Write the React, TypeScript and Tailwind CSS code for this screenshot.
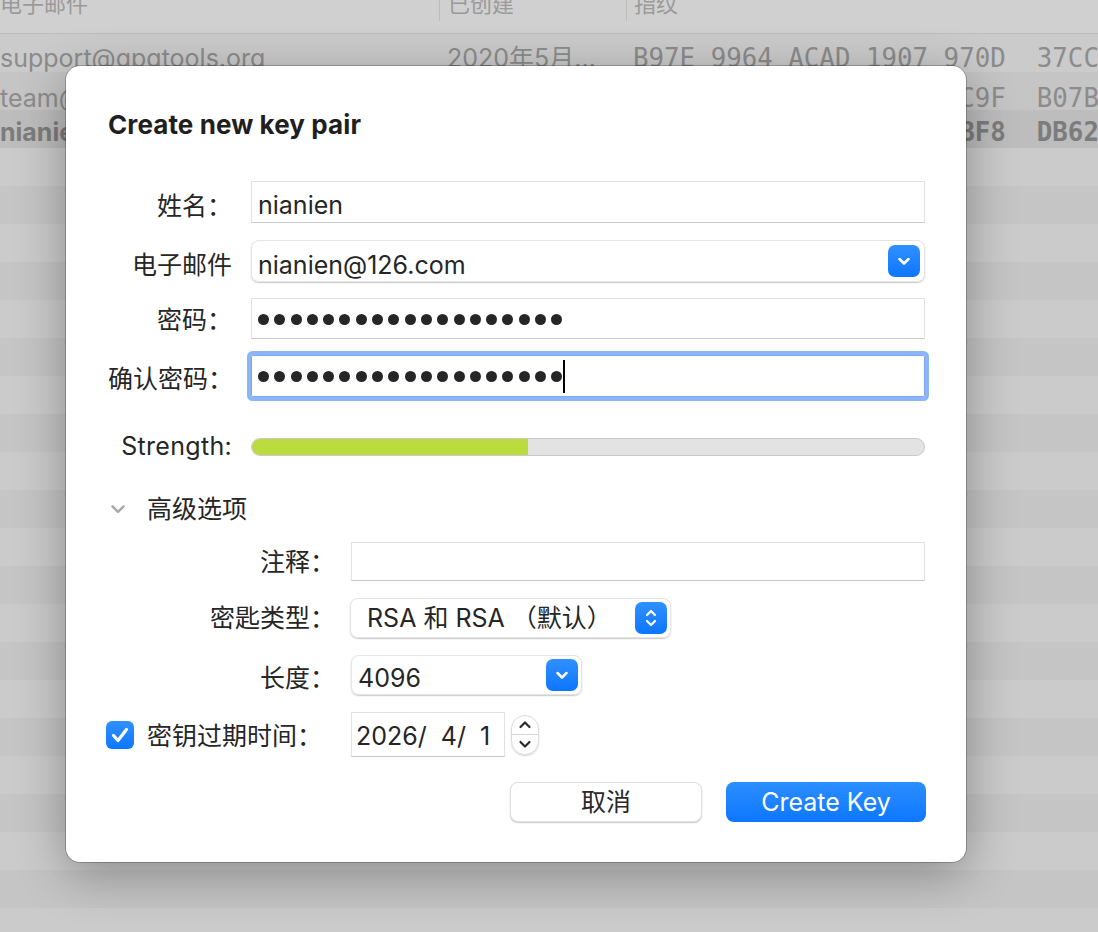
import React from "react";

const ChevDown = ({ color = "white", w = 14, h = 9, sw = 2.5 }: { color?: string; w?: number; h?: number; sw?: number }) => (
  <svg width={w} height={h} viewBox="0 0 14 9" fill="none">
    <path d="M2.5 2l4.5 4.5L11.5 2" stroke={color} strokeWidth={sw} strokeLinecap="round" strokeLinejoin="round" />
  </svg>
);

const UpDown = () => (
  <svg width="14" height="22" viewBox="0 0 14 22" fill="none">
    <path d="M3 8l4-4 4 4M3 14l4 4 4-4" stroke="white" strokeWidth="2.2" strokeLinecap="round" strokeLinejoin="round" />
  </svg>
);

const BlueBtn = ({ children, cls }: { children: React.ReactNode; cls: string }) => (
  <div className={`flex items-center justify-center rounded-[7px] bg-linear-to-b from-[#2f90ff] to-[#0a76ff] ${cls}`}>{children}</div>
);

const Dots = ({ n }: { n: number }) => (
  <div className="flex items-center gap-[5.3px]">
    {Array.from({ length: n }).map((_, i) => (
      <div key={i} className="w-[11px] h-[11px] rounded-full bg-[#262626]" />
    ))}
  </div>
);

const rows = [
  { email: "support@gpgtools.org", date: "2020年5月…", fp: "B97E 9964 ACAD 1907 970D  37CC 8A9E 0B4D", bold: false, bg: "bg-[#cbcbcb]", pt: "pt-[10px]" },
  { email: "team@gpgtools.org", date: "2020年5月…", fp: "85E3 8F69 046B 44C1 EC9F  B07B 1234 5678", bold: false, bg: "bg-[#c5c5c5]", pt: "pt-[14px]" },
  { email: "nianien@126.com", date: "2026年4月…", fp: "A1C2 3D4E 5F60 7182 9BF8  DB62 0F1E 2D3C", bold: true, bg: "bg-[#bdbdbd]", pt: "pt-[6px]" },
];

export default function App() {
  const stripes = Array.from({ length: 21 });
  return (
    <div className="relative w-[1098px] h-[932px] overflow-hidden bg-[#c9c9c9] font-[Inter,'Noto_Sans_CJK_SC',sans-serif]">
      {/* background table */}
      <div className="flex flex-col">
        <div className="h-[34px] bg-[#d0d0d0] border-b border-[#bdbdbd] text-[22px] text-[#9a9a9a] leading-[22px] overflow-hidden">
          <div className="flex -mt-[7px]">
            <div className="w-[439px] shrink-0">电子邮件</div>
            <div className="w-[1px] h-[28px] bg-[#bcbcbc] shrink-0" />
            <div className="w-[186px] shrink-0 pl-[8px]">已创建</div>
            <div className="w-[1px] h-[28px] bg-[#bcbcbc] shrink-0" />
            <div className="pl-[7px]">指纹</div>
          </div>
        </div>
        {rows.map((r, i) => (
          <div key={i} className={`h-[38px] flex items-center whitespace-pre overflow-hidden text-[25px] leading-[30px] ${r.bg} ${r.pt} ${r.bold ? "font-bold text-[#7c7c7c]" : "text-[#8c8c8c]"}`}>
            <div className="w-[447px] shrink-0 overflow-hidden">{r.email}</div>
            <div className="w-[186px] shrink-0 overflow-hidden">{r.date}</div>
            <div className="shrink-0 font-['DejaVu_Sans_Mono',monospace] text-[25.8px]">{r.fp}</div>
          </div>
        ))}
        {stripes.map((_, i) => (
          <div key={i} className={`h-[38px] ${i % 2 === 0 ? "bg-[#cbcbcb]" : "bg-[#c5c5c5]"}`} />
        ))}
      </div>

      {/* dialog */}
      <div className="absolute left-[66px] top-[66px] w-[900px] h-[796px] bg-white rounded-[14px] shadow-[0_0_0_1px_rgba(0,0,0,0.22),0_12px_50px_rgba(0,0,0,0.32)] pl-[42px] pr-[41px] pt-[44px] text-[25px] leading-[30px] text-[#262626] flex flex-col">
        <div className="h-[30px] leading-[30px] font-bold text-[26px] text-[#1f1f1f] tracking-[0.1px]">Create new key pair</div>

        {/* name */}
        <div className="mt-[41px] flex items-center">
          <div className="w-[124px] text-right whitespace-nowrap pt-[7px]">姓名：</div>
          <div className="ml-[19px] flex-1 h-[42px] border border-[#e2e2e2] border-b-[#c9c9c9] flex items-center pl-[6px] pt-[6px]">nianien</div>
        </div>

        {/* email */}
        <div className="mt-[17px] flex items-center">
          <div className="w-[124px] text-right whitespace-nowrap pt-[8px]">电子邮件</div>
          <div className="ml-[19px] flex-1 h-[42px] rounded-[8px] border border-[#e4e4e4] shadow-[0_1px_1.5px_rgba(0,0,0,0.22)] flex items-center pl-[6px] pr-[4px]">
            <div className="flex-1 pt-[7px]">nianien@126.com</div>
            <BlueBtn cls="w-[32px] h-[32px]"><ChevDown /></BlueBtn>
          </div>
        </div>

        {/* password */}
        <div className="mt-[16px] flex items-center">
          <div className="w-[124px] text-right whitespace-nowrap pt-[3px]">密码：</div>
          <div className="ml-[19px] flex-1 h-[41px] border border-[#e2e2e2] border-b-[#c9c9c9] flex items-center pl-[6px] pt-[2px]">
            <Dots n={19} />
          </div>
        </div>

        {/* confirm */}
        <div className="mt-[16px] flex items-center">
          <div className="w-[124px] text-right whitespace-nowrap pt-[6px]">确认密码：</div>
          <div className="ml-[19px] flex-1 h-[42px] border border-[#7fa9ee] shadow-[0_0_0_4px_#8cb5f7] rounded-[2px] flex items-center pl-[6px]">
            <Dots n={19} />
            <div className="w-[2px] h-[33px] bg-black ml-[1px]" />
          </div>
        </div>

        {/* strength */}
        <div className="mt-[34px] h-[30px] flex items-center">
          <div className="w-[124px] text-right whitespace-nowrap tracking-[0.3px]">Strength:</div>
          <div className="ml-[19px] flex-1 h-[18px] rounded-full bg-[#e3e3e3] border border-[#c9c9c9] overflow-hidden flex mt-[2px]">
            <div className="h-full w-[41%] bg-[#bcdb3e] rounded-l-full" />
          </div>
        </div>

        {/* disclosure */}
        <div className="mt-[33px] h-[30px] flex items-center">
          <div className="ml-[1px] w-[38px] flex items-center"><ChevDown color="#a8a8a8" w={18} h={11} sw={2} /></div>
          <div>高级选项</div>
        </div>

        {/* comment */}
        <div className="mt-[18px] flex items-center">
          <div className="w-[227px] text-right whitespace-nowrap">注释：</div>
          <div className="ml-[16px] flex-1 h-[39px] border border-[#e2e2e2] border-b-[#c9c9c9]" />
        </div>

        {/* key type */}
        <div className="mt-[17px] flex items-center">
          <div className="w-[227px] text-right whitespace-nowrap">密匙类型：</div>
          <div className="ml-[15px] w-[321px] h-[40px] rounded-[8px] border border-[#e4e4e4] shadow-[0_1px_1.5px_rgba(0,0,0,0.22)] flex items-center pl-[16px] pr-[3px]">
            <div className="flex-1 whitespace-pre">RSA 和 RSA （默认）</div>
            <BlueBtn cls="w-[32px] h-[32px]"><UpDown /></BlueBtn>
          </div>
        </div>

        {/* length */}
        <div className="mt-[17px] flex items-center">
          <div className="w-[227px] text-right whitespace-nowrap pt-[5px]">长度：</div>
          <div className="ml-[16px] w-[231px] h-[40px] rounded-[8px] border border-[#e4e4e4] shadow-[0_1px_1.5px_rgba(0,0,0,0.22)] flex items-center pl-[6px] pr-[3px]">
            <div className="flex-1 pt-[6px]">4096</div>
            <BlueBtn cls="w-[32px] h-[32px]"><ChevDown /></BlueBtn>
          </div>
        </div>

        {/* expiry */}
        <div className="mt-[17px] flex items-center">
          <div className="w-[243px] flex items-center">
            <div className="w-[28px] h-[28px] rounded-[6px] bg-linear-to-b from-[#2f90ff] to-[#0a76ff] flex items-center justify-center -ml-[2px]">
              <svg width="20" height="18" viewBox="0 0 20 18" fill="none">
                <path d="M3.5 9.5l4.5 5L16.5 3.5" stroke="white" strokeWidth="3.2" strokeLinecap="round" strokeLinejoin="round" />
              </svg>
            </div>
            <div className="ml-[13px] whitespace-nowrap pt-[2px]">密钥过期时间：</div>
          </div>
          <div className="w-[154px] h-[45px] border border-[#e2e2e2] border-b-[#c9c9c9] flex items-center pl-[4px] whitespace-pre pt-[2px]">2026/  4/  1</div>
          <div className="ml-[6px] w-[28px] h-[40px] rounded-full border border-[#dcdcdc] shadow-[0_1px_1.5px_rgba(0,0,0,0.18)] flex flex-col items-center">
            <div className="flex-1 flex items-center justify-center">
              <svg width="14" height="9" viewBox="0 0 14 9" fill="none"><path d="M2.5 7L7 2.5 11.5 7" stroke="#2a2a2a" strokeWidth="2.2" strokeLinecap="round" strokeLinejoin="round" /></svg>
            </div>
            <div className="w-full h-[1px] bg-[#d6d6d6]" />
            <div className="flex-1 flex items-center justify-center">
              <ChevDown color="#2a2a2a" sw={2.2} />
            </div>
          </div>
        </div>

        {/* buttons */}
        <div className="mt-[25px] flex justify-end gap-[24px] -mr-[1px]">
          <div className="w-[192px] h-[40px] rounded-[8px] bg-white border border-[#e0e0e0] shadow-[0_1px_1.5px_rgba(0,0,0,0.22)] flex items-center justify-center text-[#2a2a2a]">取消</div>
          <div className="w-[200px] h-[40px] rounded-[8px] bg-linear-to-b from-[#2b8eff] to-[#0a77ff] flex items-center justify-center text-white">Create Key</div>
        </div>
      </div>
    </div>
  );
}
